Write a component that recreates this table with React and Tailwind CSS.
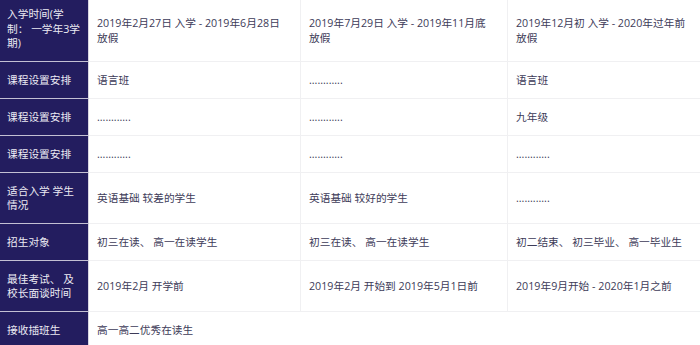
import React from "react";

const rows = [
  {
    head: "入学时间(学制： 一学年3学期)",
    cells: [
      ["2019年2月27日 入学 - 2019年6月28日", "放假"],
      ["2019年7月29日 入学 - 2019年11月底", "放假"],
      ["2019年12月初 入学 - 2020年过年前", "放假"],
    ],
    first: true,
  },
  { head: "课程设置安排", cells: ["语言班", "............", "语言班"] },
  { head: "课程设置安排", cells: ["............", "............", "九年级"] },
  { head: "课程设置安排", cells: ["............", "............", "............"] },
  {
    head: "适合入学 学生情况",
    cells: ["英语基础 较差的学生", "英语基础 较好的学生", "............"],
  },
  {
    head: "招生对象",
    cells: ["初三在读、 高一在读学生", "初三在读、 高一在读学生", "初二结束、 初三毕业、 高一毕业生"],
  },
  {
    head: "最佳考试、 及校长面谈时间",
    cells: ["2019年2月 开学前", "2019年2月 开始到 2019年5月1日前", "2019年9月开始 - 2020年1月之前"],
  },
];

function Cell({ value }) {
  if (Array.isArray(value)) {
    return value.map((line, k) => (
      <span key={k} className="block whitespace-nowrap">
        {line}
      </span>
    ));
  }
  return value;
}

export default function App() {
  return (
    <div className="w-[700px] h-[345px] overflow-hidden bg-white font-['Open_Sans','Noto_Sans_CJK_SC',sans-serif] text-[10.7px]">
      <table className="w-[700px] table-fixed border-separate border-spacing-0">
        <colgroup>
          <col className="w-[89px]" />
          <col className="w-[212px]" />
          <col className="w-[207px]" />
          <col className="w-[192px]" />
        </colgroup>
        <tbody>
          {rows.map((row, i) => (
            <tr key={i}>
              <th
                className={`bg-[#231d5f] text-[#ecebf3] font-normal text-left align-middle leading-[14.5px] pl-[7px] pr-[7px] border-b border-r border-b-[#c3c0d3] border-r-[#d8d6e2] ${
                  row.first ? "pt-[7px] pb-[10px]" : "pt-[11px] pb-[10px]"
                }`}
              >
                {row.head}
              </th>
              {row.cells.map((c, j) => (
                <td
                  key={j}
                  className={`text-[#3d3b58] align-middle leading-[15px] pl-2 pt-[11px] pb-[10px] border-b border-[#f0f0f2] ${
                    j < 2 ? "border-r pr-2" : "pr-1"
                  }`}
                >
                  <Cell value={c} />
                </td>
              ))}
            </tr>
          ))}
          <tr>
            <th className="bg-[#231d5f] text-[#ecebf3] font-normal text-left align-middle leading-[14.5px] pl-[7px] pr-[7px] pt-[11px] pb-[10px] border-r border-r-[#d8d6e2]">
              接收插班生
            </th>
            <td colSpan={3} className="text-[#3d3b58] align-middle leading-[15px] pl-2 pt-[11px] pb-[10px]">
              高一高二优秀在读生
            </td>
          </tr>
        </tbody>
      </table>
    </div>
  );
}
